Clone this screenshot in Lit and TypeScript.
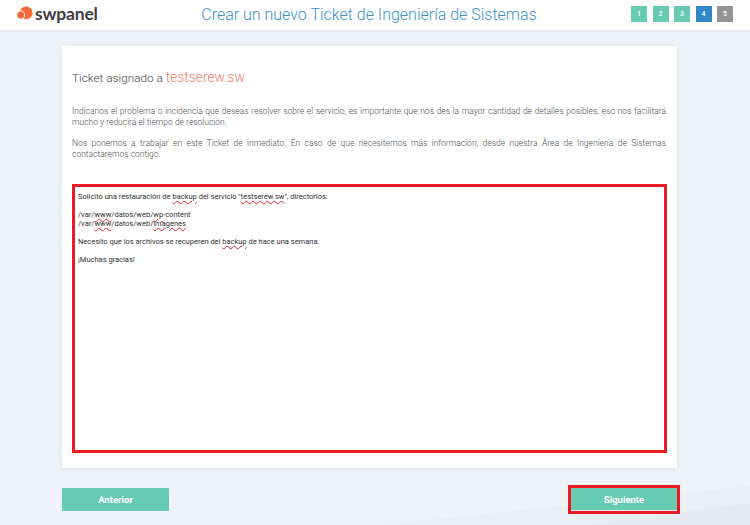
import { LitElement, html, css } from "lit";
import { customElement } from "lit/decorators.js";

@customElement("app-root")
export class AppRoot extends LitElement {
  static styles = css`
    :host { display: block; width: 750px; height: 525px; font-family: Roboto, sans-serif; overflow: hidden; }
    .page { position: relative; height: 525px; background: #eff2f6; display: flex; flex-direction: column; overflow: hidden; }
    .wave { position: absolute; left: 0; bottom: 0; width: 750px; height: 50px; }
    .header { position: relative; height: 30px; background: #fff; display: flex; align-items: center; box-shadow: 0 1px 3px rgba(0,0,0,.05); }
    .logo { width: 200px; padding-left: 17px; box-sizing: border-box; display: flex; align-items: center; gap: 2px; flex: none; }
    .logo svg { margin-bottom: 4px; }
    .logo span { font: 700 17.5px Lato, sans-serif; color: #3f3f3f; letter-spacing: -.2px; line-height: 20px; position: relative; top: -1px; }
    .title { width: 338px; text-align: center; flex: none; font-size: 16px; font-weight: 300; color: #3d91cf; white-space: nowrap; position: relative; top: -1px; }
    .steps { display: flex; gap: 5.5px; margin-left: 93px; position: relative; top: -1px; }
    .step { width: 16px; height: 16px; background: #66cbb0; color: #fff; font-size: 7px; font-weight: 500; display: flex; align-items: center; justify-content: center; }
    .step.on { background: #2f88c8; }
    .step.off { background: #949494; }
    .card { position: relative; margin: 16px 0 0 62px; width: 615px; height: 422px; box-sizing: border-box; background: #fff; padding: 24px 10px 0 10px; box-shadow: 0 1px 6px rgba(0,0,0,.06); }
    h1 { margin: 0; font-size: 11.8px; font-weight: 300; line-height: 15px; color: #40454b; white-space: nowrap; }
    h1 b { font-weight: 300; color: #fa7a66; font-size: 13.8px; }
    p { margin: 0; width: 594px; font-size: 8.5px; font-weight: 300; line-height: 11px; color: #4d5156; text-align: justify; }
    .p1 { margin-top: 20px; }
    .p2 { margin-top: 10px; }
    .box { margin-top: 24px; width: 595px; height: 269px; box-sizing: border-box; border: 3px solid #ed1c24; padding: 5px 3px; font-size: 7.5px; line-height: 9px; color: #333; font-weight: 400; }
    .box div { height: 9px; white-space: nowrap; }
    .box .gap { height: 9px; }
    .sp { text-decoration: underline wavy #e0242c; text-decoration-thickness: .5px; text-underline-offset: 1px; }
    .actions { position: relative; display: flex; margin: 17px 0 0 59px; width: 621px; justify-content: space-between; }
    .holder { padding: 3px; }
    .holder.mark { padding: 0; border: 3px solid #ed1c24; }
    .btn { width: 107px; height: 23px; background: #66cbb0; color: #fff; font: 700 9.5px Roboto, sans-serif; display: flex; align-items: center; justify-content: center; border-radius: 1px; }
    .holder.mark .btn { width: 106px; height: 22px; border-radius: 0; }
  `;

  render() {
    return html`<div class="page">
      <svg class="wave" viewBox="0 0 750 50" aria-hidden="true">
        <polygon points="380,50 750,11 750,50" fill="#ebeff4"></polygon>
        <polygon points="585,50 750,28 750,50" fill="#e4eaf0"></polygon>
      </svg>
      <header class="header">
        <div class="logo">
          <svg width="16" height="14" viewBox="0 0 16 14" aria-hidden="true">
            <circle cx="9.2" cy="6.8" r="6.4" fill="#f36a3b"></circle>
            <circle cx="3.7" cy="9" r="4.4" fill="#fff"></circle>
            <circle cx="3.7" cy="9" r="3.5" fill="#f36a3b"></circle>
          </svg>
          <span>swpanel</span>
        </div>
        <div class="title">Crear un nuevo Ticket de Ingeniería de Sistemas</div>
        <div class="steps">
          <div class="step">1</div><div class="step">2</div><div class="step">3</div>
          <div class="step on">4</div><div class="step off">5</div>
        </div>
      </header>
      <main class="card">
        <h1>Ticket asignado a <b>testserew.sw</b></h1>
        <p class="p1">Indícanos el problema o incidencia que deseas resolver sobre el servicio, es importante que nos des la mayor cantidad de detalles posibles, eso nos facilitará mucho y reducirá el tiempo de resolución.</p>
        <p class="p2">Nos ponemos a trabajar en este Ticket de inmediato. En caso de que necesitemos más información, desde nuestra Área de Ingeniería de Sistemas contactaremos contigo.</p>
        <div class="box">
          <div>Solicito una restauración de <span class="sp">backup</span> del servicio "<span class="sp">testserew.sw</span>", directorios:</div>
          <div class="gap"></div>
          <div>/var/<span class="sp">www</span>/datos/web/<span class="sp">wp</span>-content</div>
          <div>/var/<span class="sp">www</span>/datos/web/<span class="sp">imagenes</span></div>
          <div class="gap"></div>
          <div>Necesito que los archivos se recuperen del <span class="sp">backup</span> de hace una semana.</div>
          <div class="gap"></div>
          <div>¡Muchas gracias!</div>
        </div>
      </main>
      <footer class="actions">
        <div class="holder"><div class="btn">Anterior</div></div>
        <div class="holder mark"><div class="btn">Siguiente</div></div>
      </footer>
    </div>`;
  }
}
